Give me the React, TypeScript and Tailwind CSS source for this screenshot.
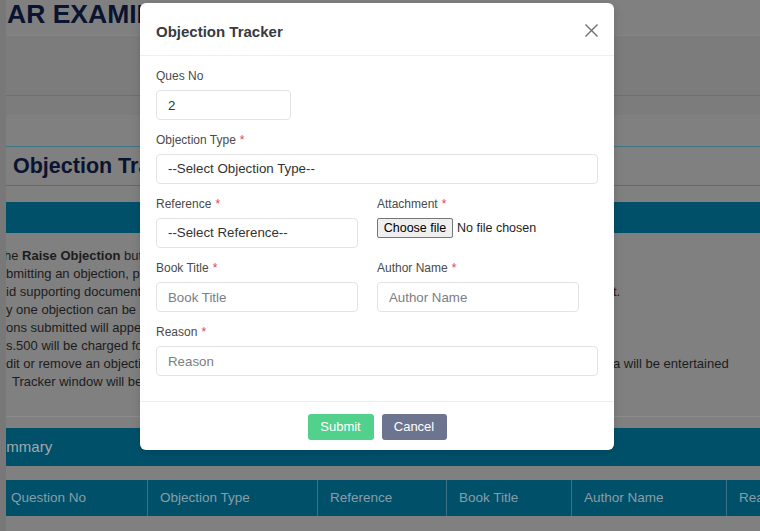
import React from "react";

const Label = ({ text, req = true }: { text: string; req?: boolean }) => (
  <div className="h-[16px] leading-[16px] text-[12px] text-[#4a4a4a] whitespace-nowrap">
    {text}
    {req && <span className="text-[#e0454f] ml-[4px]">*</span>}
  </div>
);

const inputCls =
  "mt-[6px] h-[30px] w-full rounded-[4px] border border-[#e1e3e6] bg-white px-[11px] text-[13.3px] text-[#333] placeholder:text-[#7b7e82] outline-none";

export default function App() {
  return (
    <div className="relative h-[531px] w-[760px] overflow-hidden bg-[#808080] font-['Liberation_Sans',Arial,sans-serif]">
      <div className="flex h-full">
        <div className="w-[6px] shrink-0 bg-[#787878]" />
        <div className="flex min-w-0 flex-1 flex-col overflow-hidden">
          {/* top heading */}
          <div className="h-[36px] shrink-0 border-b border-[#858585] pl-[1px]">
            <div className="whitespace-nowrap text-[26.5px] font-bold leading-[28px] text-[#0a1330]">
              AR EXAMINATION
            </div>
          </div>
          <div className="h-[60px] shrink-0 border-b border-[#6f6f6f] bg-[#7c7c7c]" />
          <div className="h-[19px] shrink-0 bg-[#7b7c7b]" />
          <div className="h-[31px] shrink-0" />
          {/* section heading */}
          <div className="flex h-[40px] shrink-0 items-center border-y border-[#3f7585] pl-[7px]">
            <div className="whitespace-nowrap text-[21.5px] font-bold text-[#0a1330]">Objection Tracker</div>
          </div>
          <div className="h-[16px] shrink-0" />
          <div className="h-[31px] shrink-0 bg-[#01506a]" />
          {/* instructions */}
          <div className="h-[184px] shrink-0 border-b border-[#8b8b8b] pt-[14px] text-[13px] leading-[18px] text-[#1c1c1c]">
            <div className="-ml-[2px] whitespace-nowrap">
              he <b>Raise Objection</b> button against the question you wish to challenge.
            </div>
            <div className="whitespace-nowrap">bmitting an objection, provide the required details.</div>
            <div className="flex whitespace-nowrap">
              <span className="w-[607px] overflow-hidden">id supporting documents along with the objection as attachmen</span>
              <span>t.</span>
            </div>
            <div className="whitespace-nowrap">y one objection can be raised against a question.</div>
            <div className="whitespace-nowrap">ons submitted will appear in the summary below.</div>
            <div className="whitespace-nowrap">s.500 will be charged for each objection raised.</div>
            <div className="flex whitespace-nowrap">
              <span className="w-[607px] overflow-hidden">dit or remove an objection before final submission; no objection after the last date</span>
              <span>a will be entertained</span>
            </div>
            <div className="whitespace-nowrap pl-[6px]">Tracker window will be closed after the last date.</div>
          </div>
          <div className="h-[11px] shrink-0" />
          <div className="flex h-[38px] shrink-0 items-center bg-[#01506a]">
            <div className="-ml-[18px] whitespace-nowrap text-[15px] text-[#a2abaf]">Summary</div>
          </div>
          <div className="h-[14px] shrink-0" />
          <div className="flex h-[36px] shrink-0 items-center bg-[#01506a] text-[13.5px] text-[#8a9da5] whitespace-nowrap">
            <div className="w-[141px] shrink-0 pl-[5px]">Question No</div>
            <div className="flex h-full w-[170px] shrink-0 items-center border-l border-[#3a7286] pl-[12px]">Objection Type</div>
            <div className="flex h-full w-[129px] shrink-0 items-center border-l border-[#3a7286] pl-[12px]">Reference</div>
            <div className="flex h-full w-[125px] shrink-0 items-center border-l border-[#3a7286] pl-[12px]">Book Title</div>
            <div className="flex h-full w-[155px] shrink-0 items-center border-l border-[#3a7286] pl-[12px]">Author Name</div>
            <div className="flex h-full w-[120px] shrink-0 items-center border-l border-[#3a7286] pl-[12px]">Reason</div>
          </div>
        </div>
      </div>

      {/* modal */}
      <div className="absolute left-[140px] top-[3px] w-[474px] rounded-[6px] bg-white shadow-[0_2px_10px_rgba(0,0,0,0.15)]">
        <div className="flex h-[53px] items-center justify-between border-b border-[#eeeeee] pl-4 pr-4 pt-[7px]">
          <div className="text-[15px] font-bold text-[#373a3e]">Objection Tracker</div>
          <svg width="13" height="13" viewBox="0 0 13 13" className="mb-[5px]">
            <path d="M0.5 0.5 L12.5 12.5 M12.5 0.5 L0.5 12.5" stroke="#6f6f6f" strokeWidth="1.4" fill="none" />
          </svg>
        </div>
        <div className="px-4 pb-[25px] pt-[12px]">
          <div className="mb-[12px] w-[135px]">
            <Label text="Ques No" req={false} />
            <input className={inputCls} defaultValue="2" readOnly />
          </div>
          <div className="mb-[12px]">
            <Label text="Objection Type" />
            <select className={inputCls + " appearance-none text-[#4b4b4b]"}>
              <option>--Select Objection Type--</option>
            </select>
          </div>
          <div className="mb-[12px] grid grid-cols-[202px_202px] gap-x-[19px]">
            <div>
              <Label text="Reference" />
              <select className={inputCls + " appearance-none text-[#4b4b4b]"}>
                <option>--Select Reference--</option>
              </select>
            </div>
            <div>
              <Label text="Attachment" />
              <div className="mt-[6px] flex h-[20px] items-center whitespace-nowrap text-[12.5px] text-[#1e1e1e]">
                <button className="h-[20px] w-[76px] rounded-[2px] border border-[#767676] bg-[#efefef] text-[12.5px] text-black">
                  Choose file
                </button>
                <span className="ml-[4px]">No file chosen</span>
              </div>
            </div>
          </div>
          <div className="mb-[12px] grid grid-cols-[202px_202px] gap-x-[19px]">
            <div>
              <Label text="Book Title" />
              <input className={inputCls} placeholder="Book Title" />
            </div>
            <div>
              <Label text="Author Name" />
              <input className={inputCls} placeholder="Author Name" />
            </div>
          </div>
          <div>
            <Label text="Reason" />
            <input className={inputCls} placeholder="Reason" />
          </div>
        </div>
        <div className="flex h-[49px] items-center justify-center gap-2 border-t border-[#eeeeee] pt-[2px]">
          <button className="h-[26px] w-[66px] rounded-[3px] bg-[#51d18c] text-[13px] text-white">Submit</button>
          <button className="h-[26px] w-[65px] rounded-[3px] bg-[#6d7490] text-[13px] text-white">Cancel</button>
        </div>
      </div>
    </div>
  );
}
